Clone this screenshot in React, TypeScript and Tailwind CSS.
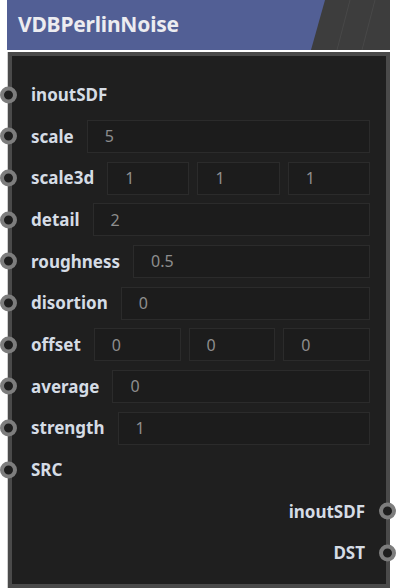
import React from "react";

const font = { fontFamily: '"Noto Sans", "Open Sans", sans-serif' };

function Socket({ side }: { side: "left" | "right" }) {
  return (
    <div
      className={`absolute top-1/2 -translate-y-1/2 w-[17px] h-[17px] rounded-full bg-[#1e1e1e] border-[4.5px] border-[#7d7d7d] ${
        side === "left" ? "left-[-12px]" : "right-[-10px]"
      }`}
    />
  );
}

function Field({ value }: { value: string }) {
  return (
    <div className="h-[33px] flex-1 border border-[#2b2b2b] bg-[#1c1c1c] flex items-center pl-[17px] text-[16px] text-[#8e8e8e]">
      {value}
    </div>
  );
}

function Row({
  label,
  values,
  out,
}: {
  label: string;
  values?: string[];
  out?: boolean;
}) {
  return (
    <div className={`relative h-[41.67px] flex items-center ${out ? "justify-end pr-[21px]" : "pl-[19px] pr-[16px]"}`}>
      <Socket side={out ? "right" : "left"} />
      <span className="text-[17px] font-bold text-[#d5dce5] whitespace-nowrap">{label}</span>
      {values && (
        <div className="flex-1 flex gap-[8px] ml-[13px]">
          {values.map((v, i) => (
            <Field key={i} value={v} />
          ))}
        </div>
      )}
    </div>
  );
}

export default function App() {
  const rows: { label: string; values?: string[]; out?: boolean }[] = [
    { label: "inoutSDF" },
    { label: "scale", values: ["5"] },
    { label: "scale3d", values: ["1", "1", "1"] },
    { label: "detail", values: ["2"] },
    { label: "roughness", values: ["0.5"] },
    { label: "disortion", values: ["0"] },
    { label: "offset", values: ["0", "0", "0"] },
    { label: "average", values: ["0"] },
    { label: "strength", values: ["1"] },
    { label: "SRC" },
    { label: "inoutSDF", out: true },
    { label: "DST", out: true },
  ];
  return (
    <div className="w-[397px] h-[588px] bg-white overflow-hidden pl-[7px]" style={font}>
      <div className="w-[383px] flex flex-col">
        <div className="relative h-[50px] bg-[#525f95] flex items-center pl-[11px] overflow-hidden">
          <span className="relative z-10 text-[21px] font-bold text-[#ececf0] tracking-[-0.2px]">VDBPerlinNoise</span>
          <svg className="absolute inset-0" width="383" height="50" viewBox="0 0 383 50">
            <polygon points="318,0 383,0 383,50 304,50" fill="#3d3d3d" />
            <line x1="343" y1="0" x2="330" y2="50" stroke="#484848" strokeWidth="1" />
            <line x1="368" y1="0" x2="355" y2="50" stroke="#484848" strokeWidth="1" />
          </svg>
        </div>
        <div className="h-[2px]" />
        <div className="border-l border-[#cfcfcf]">
          <div className="h-[536px] border-[4px] border-[#4a4a4a] bg-[#1f1f1f] pt-[18px]">
            {rows.map((r, i) => (
              <Row key={i} label={r.label} values={r.values} out={r.out} />
            ))}
          </div>
        </div>
      </div>
    </div>
  );
}
